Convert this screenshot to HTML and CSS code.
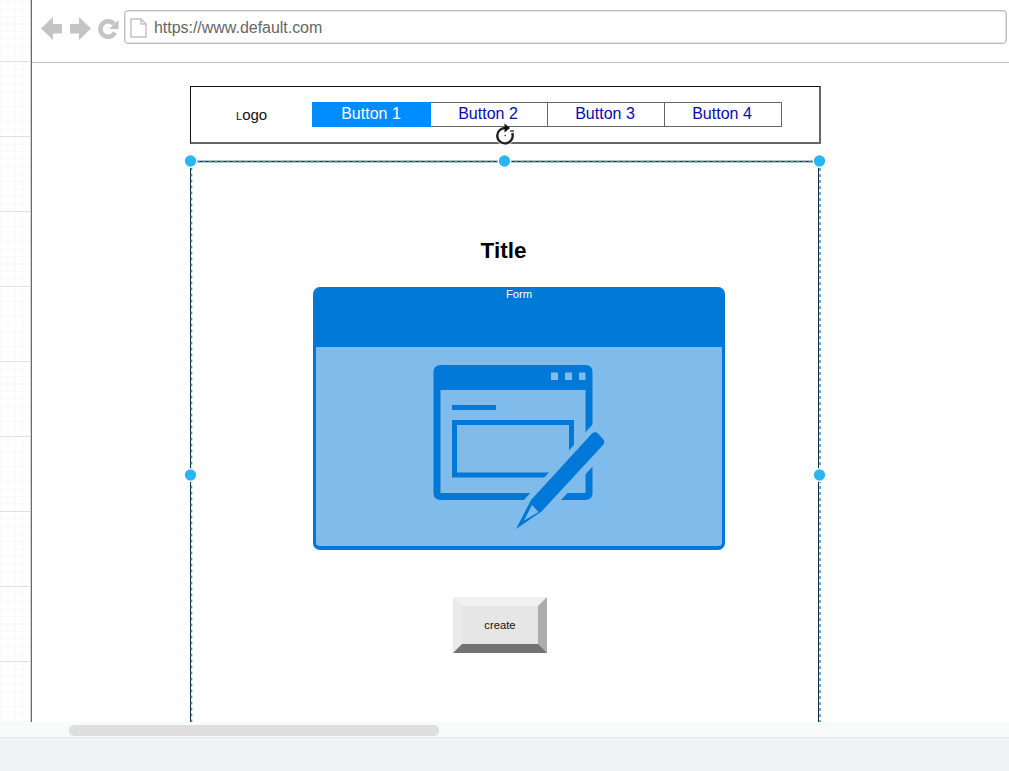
FILE: index.html
```html
<!DOCTYPE html>
<html lang="en">
<head>
<meta charset="utf-8">
<title>Wireframe editor</title>
<link rel="stylesheet" href="styles.css">
</head>
<body>
<main class="canvas">
  <div class="gutter"></div>
  <section class="browser">
    <header class="toolbar">
      <svg class="controls" width="78" height="26" viewBox="0 0 78 26">
        <path d="M0 13.500 12 2V9H21V18.500H12V25Z M50 13.500 38 2V9H29V18.500H38V25Z"/>
        <path class="reload" d="M73 9A7.700 7.700 0 1 0 74 17.500"/>
        <path d="M77.500 5V14H68Z"/>
      </svg>
      <div class="address">
        <svg width="17" height="20" viewBox="0 0 17 20"><path class="page" d="M1 1H11L16 6V19H1Z M11 1V6H16"/></svg>
        <span>https://www.default.com</span>
      </div>
    </header>
    <div class="content">
      <nav class="navbar">
        <div class="logo"><small>L</small>ogo</div>
        <div class="tabs">
          <div class="tab active">Button 1</div>
          <div class="tab">Button 2</div>
          <div class="tab third">Button 3</div>
          <div class="tab fourth">Button 4</div>
        </div>
      </nav>
      <section class="panel">
        <h1>Title</h1>
        <div class="form">
          <div class="form-head">Form</div>
          <div class="form-body">
            <svg width="172" height="166" viewBox="433 364 172 166">
              <path fill="#0078d7" fill-rule="evenodd" d="M441 365H585Q592.500 365 592.500 372V493Q592.500 500 585 500H441Q433.500 500 433.500 493V372Q433.500 365 441 365Z M440.500 390V493H585.500V390Z"/>
              <path fill="#7fbbeb" d="M551 372.500H558V380H551Z M565 372.500H572V380H565Z M579 372.500H585.500V380H579Z"/>
              <path fill="#0078d7" d="M452 405H496V410H452Z"/>
              <path fill="none" stroke="#0078d7" stroke-width="5" d="M454.500 422.500H571.500V475H454.500Z"/>
              <path fill="#7fbbeb" d="M593 424 612 446 545 517 514 531 523 501Z"/>
              <path fill="#0078d7" d="M592 433.500Q595 431 598 433.500L603 439Q605.500 442 603 445L541.500 511.500 516 529 531 500Z"/>
              <path fill="#7fbbeb" d="M532 505 538.500 512 524 520.500Z"/>
            </svg>
          </div>
        </div>
        <div class="create">create</div>
      </section>
      <svg class="selection" width="650" height="620" viewBox="180 102 650 620">
        <path class="base" d="M190.500 161.500H819"/>
        <path class="dash" d="M190.500 161.500H820V722M191.500 161.500V722"/>
        <g class="handles">
          <circle cx="190.500" cy="161" r="6.300"/><circle cx="504.500" cy="161" r="6.300"/><circle cx="819.500" cy="161" r="6.300"/>
          <circle cx="190.500" cy="475" r="6.300"/><circle cx="819.500" cy="475" r="6.300"/>
        </g>
        <circle cx="505" cy="136" r="9.500" fill="#fff" opacity=".85"/>
        <path d="M505.500 128A7.700 7.700 0 1 0 512.200 133" fill="none" stroke="#222" stroke-width="2.400"/>
        <path d="M504.500 123.500 510 128 504.500 132.500Z" fill="#111"/>
        <path d="M510 131H514M504.500 135.500H506" stroke="#444" stroke-width="1.300"/>
      </svg>
    </div>
  </section>
</main>
<div class="scrollbar"><div class="thumb"></div></div>
<footer class="footer"></footer>
</body>
</html>
```
FILE: styles.css
```css
* { box-sizing: border-box; }
body {
  margin: 0;
  height: 771px;
  display: flex;
  flex-direction: column;
  overflow: hidden;
  background: #fff;
  font-family: "Liberation Sans", Arial, sans-serif;
}
.canvas { height: 722px; display: flex; overflow: hidden; }
.gutter {
  width: 31px;
  flex: none;
  background-image:
    linear-gradient(#e2e2e2 1px, transparent 1px),
    linear-gradient(#f8f8f8 1px, transparent 1px),
    linear-gradient(90deg, #f8f8f8 1px, transparent 1px);
  background-size: 100% 75px, 100% 7.5px, 7.5px 100%;
  background-position: 0 61px, 0 1px, 0 0;
}
.browser { flex: 1; border-left: 1px solid #686868; box-shadow: -1px 0 #d4d4d4; }
.toolbar {
  height: 63px;
  padding: 10px 2px 0 9px;
  display: flex;
  align-items: flex-start;
  border-bottom: 1px solid #bebebe;
}
.controls { margin: 5px 5px 0 0; fill: #c4c4c4; flex: none; }
.reload { fill: none; stroke: #c4c4c4; stroke-width: 4.5; }
.address {
  flex: 1;
  height: 34px;
  padding: 1px 0 0 5px;
  display: flex;
  align-items: center;
  gap: 7px;
  border: 1px solid #bcbcbc;
  box-shadow: inset 0 0 0 .5px #cecece;
  border-radius: 4px;
  font-size: 16px;
  color: #666;
}
.address span { padding-top: 1px; letter-spacing: -.03px; }
.page { fill: #fff; stroke: #c4c4c4; stroke-width: 1.5; }
.content { position: relative; padding: 23px 0 0 158px; }
.navbar {
  width: 631px;
  height: 58px;
  display: flex;
  padding: 15px 0 0 45px;
  border: 1px solid #111;
  border-bottom: 2px solid #666;
  border-right: 2px solid #666;
}
.logo { width: 76px; flex: none; line-height: 26px; font-size: 15px; color: #111; }
.logo small { font-size: 11px; }
.tabs { display: grid; grid-template-columns: 119px 117px 117px 117px; height: 25px; flex: none; }
.tab {
  border: 1px solid #666;
  border-left-width: 0;
  font-size: 16px;
  line-height: 22px;
  text-align: center;
  color: #0a0aad;
}
.tab:nth-child(2), .tab.third, .tab.fourth { padding-right: 2px; }
.tab.active { background: #008cff; border-color: #008cff; color: #fff; }
.panel {
  width: 629px;
  height: 640px;
  margin-top: 17px;
  border: 1px solid #142c3b;
}
h1 {
  margin: 76px 0 0;
  width: 625px;
  height: 26px;
  line-height: 26px;
  text-align: center;
  font-size: 22.5px;
  color: #000;
}
.form {
  width: 412px;
  height: 263px;
  margin: 23px 0 0 122px;
  border: solid #0078d7;
  border-width: 0 3px 4px;
  border-radius: 7px;
  background: #7fbbeb;
  overflow: hidden;
}
.form-head {
  height: 60px;
  background: #0078d7;
  color: #fff;
  font-size: 11.25px;
  line-height: 15px;
  text-align: center;
}
.form-body { padding: 17px 0 0 117px; }
.form-body svg { display: block; }
.create {
  width: 94px;
  height: 56px;
  margin: 47px 0 0 262px;
  border: solid;
  border-width: 9px;
  border-color: #f1f1f1 #adadad #737373 #ebebeb;
  background: #e6e6e6;
  font-size: 11.25px;
  line-height: 38px;
  text-align: center;
  color: #111;
}
.selection { position: absolute; left: 148px; top: 39px; }
.base { stroke: #12303e; stroke-width: 1.6; }
.dash { fill: none; stroke: #2b9fc6; stroke-width: 1.5; stroke-dasharray: 3 3; }
.handles { fill: #29b6f2; stroke: #fff; stroke-width: 1.3; }
.scrollbar {
  height: 15px;
  flex: none;
  padding: 3px 0 0 69px;
  background: #f9fafa;
}
.thumb { width: 370px; height: 11px; border-radius: 5px; background: #dedede; }
.footer { flex: 1; background: #f1f2f4; border-top: 1px solid #e3e4e5; }
```
